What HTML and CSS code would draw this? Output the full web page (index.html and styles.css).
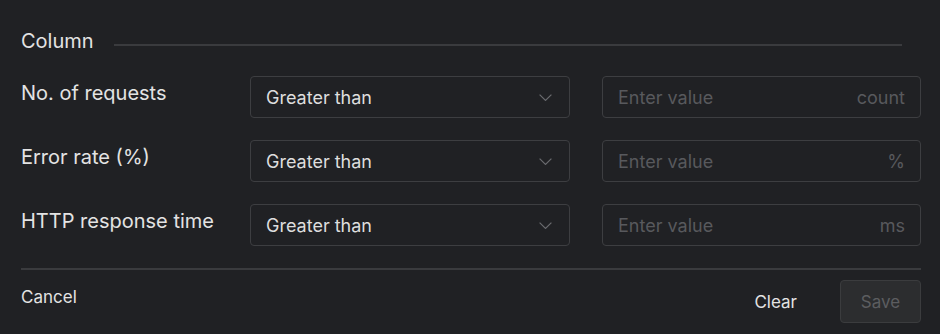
FILE: index.html
```html
<!DOCTYPE html>
<html lang="en">
<head>
    <meta charset="UTF-8">
    <meta name="viewport" content="width=device-width, initial-scale=1.0">
    <title>Column filters</title>
    <link rel="stylesheet" href="styles.css">
</head>
<body>
    <div class="panel">
        <div class="section-head">
            <span class="section-title">Column</span>
            <span class="section-line"></span>
        </div>

        <div class="filters">
            <div class="filter-label">No. of requests</div>
            <div class="select-box">
                <span>Greater than</span>
                <svg class="chevron" width="13" height="7" viewBox="0 0 13 7"><path d="M0.6 0.6L6.5 6.4L12.4 0.6" fill="none" stroke="currentColor" stroke-width="1.2"/></svg>
            </div>
            <div class="input-box">
                <span class="placeholder">Enter value</span>
                <span class="unit">count</span>
            </div>

            <div class="filter-label">Error rate (%)</div>
            <div class="select-box">
                <span>Greater than</span>
                <svg class="chevron" width="13" height="7" viewBox="0 0 13 7"><path d="M0.6 0.6L6.5 6.4L12.4 0.6" fill="none" stroke="currentColor" stroke-width="1.2"/></svg>
            </div>
            <div class="input-box">
                <span class="placeholder">Enter value</span>
                <span class="unit">%</span>
            </div>

            <div class="filter-label">HTTP response time</div>
            <div class="select-box">
                <span>Greater than</span>
                <svg class="chevron" width="13" height="7" viewBox="0 0 13 7"><path d="M0.6 0.6L6.5 6.4L12.4 0.6" fill="none" stroke="currentColor" stroke-width="1.2"/></svg>
            </div>
            <div class="input-box">
                <span class="placeholder">Enter value</span>
                <span class="unit">ms</span>
            </div>
        </div>

        <div class="divider"></div>

        <div class="footer">
            <button class="btn-text cancel">Cancel</button>
            <div class="footer-right">
                <button class="btn-text">Clear</button>
                <button class="btn-save" disabled>Save</button>
            </div>
        </div>
    </div>
</body>
</html>
```

FILE: styles.css
```css
body {
    margin: 0;
    padding: 0;
    background-color: #202124;
    color: #e3e3e3;
    font-family: Inter, "Noto Sans", sans-serif;
}
.panel {
    padding: 29px 19px 0 21px;
}
.section-head {
    display: flex;
    align-items: center;
    height: 24px;
}
.section-title {
    font-size: 20px;
    line-height: 24px;
}
.section-line {
    flex: 1;
    height: 2px;
    margin: 7px 19px 0 20px;
    background-color: #3a3b3e;
}
.filters {
    display: grid;
    grid-template-columns: 197px 320px 319px;
    column-gap: 32px;
    row-gap: 22px;
    margin-top: 23px;
}
.filter-label {
    font-size: 20px;
    line-height: 24px;
    padding-top: 5px;
    white-space: nowrap;
}
.select-box,
.input-box {
    display: flex;
    align-items: center;
    justify-content: space-between;
    height: 42px;
    box-sizing: border-box;
    padding: 0 15px;
    border: 1px solid #3d3e41;
    border-radius: 4px;
    font-size: 18px;
}
.select-box {
    color: #dedede;
}
.chevron {
    color: #6a6b6f;
    margin-right: 2px;
}
.placeholder,
.unit {
    color: #58595d;
}
.divider {
    height: 2px;
    margin-top: 22px;
    background-color: #3a3b3e;
}
.footer {
    display: flex;
    justify-content: space-between;
    align-items: flex-start;
    margin-top: 10px;
}
.footer-right {
    display: flex;
    align-items: center;
    gap: 43px;
}
button {
    font-family: inherit;
    font-size: 17px;
}
.btn-text {
    background: none;
    border: none;
    color: #e3e3e3;
    padding: 0;
    height: 43px;
}
.cancel {
    height: auto;
    line-height: 20px;
    padding-top: 7px;
}
.btn-save {
    width: 81px;
    height: 43px;
    background-color: #2c2d2f;
    border: 1px solid #3b3c3e;
    border-radius: 4px;
    color: #5c5d60;
}
```
